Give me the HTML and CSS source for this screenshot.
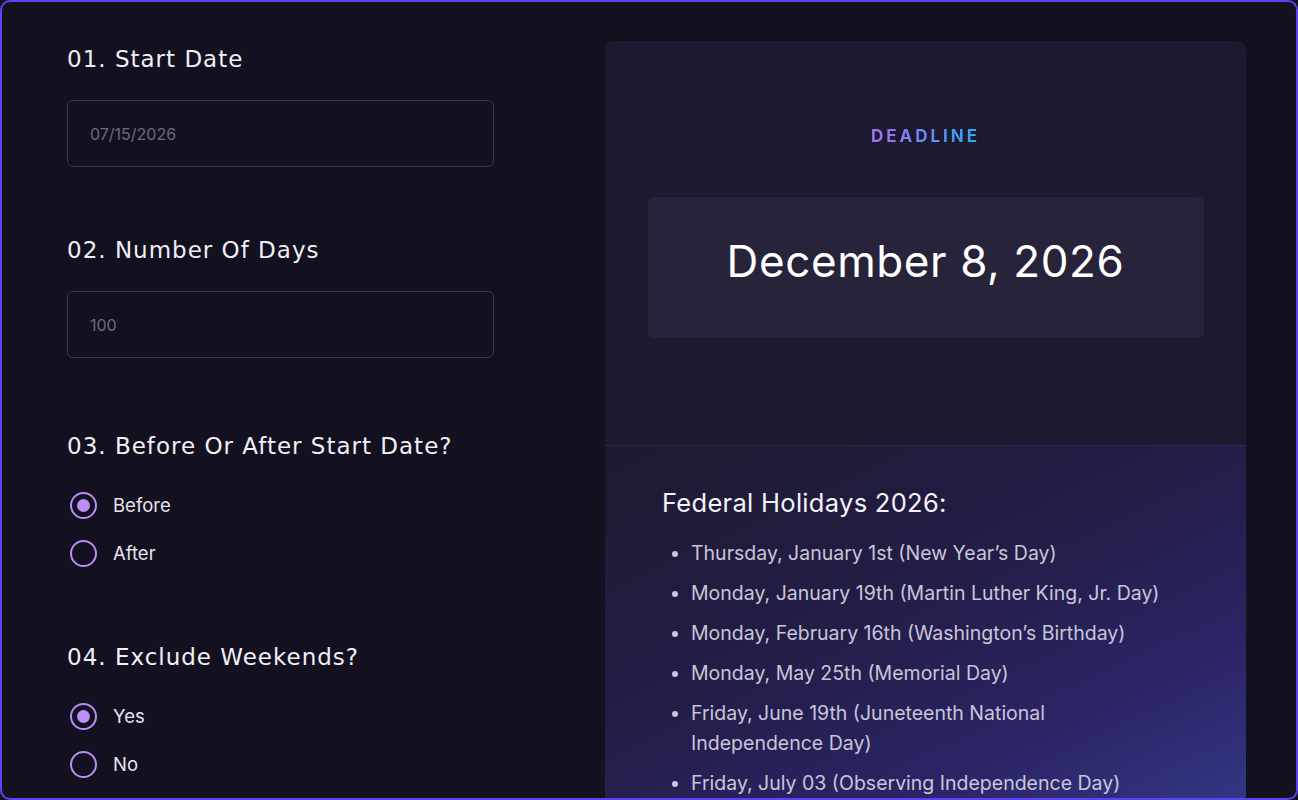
FILE: index.html
```html
<!DOCTYPE html>
<html lang="en">
<head>
<meta charset="utf-8">
<title>Deadline Calculator</title>
<link rel="stylesheet" href="styles.css">
</head>
<body>
<div class="frame">
  <form class="form">
    <section class="field">
      <h2 class="q">01. Start Date</h2>
      <div class="input">07/15/2026</div>
    </section>
    <section class="field f2">
      <h2 class="q">02. Number Of Days</h2>
      <div class="input">100</div>
    </section>
    <section class="field f3">
      <h2 class="q">03. Before Or After Start Date?</h2>
      <div class="radios">
        <div class="radio"><span class="dot on"></span><span class="lbl">Before</span></div>
        <div class="radio"><span class="dot"></span><span class="lbl">After</span></div>
      </div>
    </section>
    <section class="field f4">
      <h2 class="q">04. Exclude Weekends?</h2>
      <div class="radios">
        <div class="radio"><span class="dot on"></span><span class="lbl">Yes</span></div>
        <div class="radio"><span class="dot"></span><span class="lbl">No</span></div>
      </div>
    </section>
  </form>
  <aside class="card">
    <div class="result">
      <div class="label">DEADLINE</div>
      <div class="datebox">December 8, 2026</div>
    </div>
    <div class="holidays">
      <h3 class="htitle">Federal Holidays 2026:</h3>
      <ul class="list">
        <li>Thursday, January 1st (New Year’s Day)</li>
        <li>Monday, January 19th (Martin Luther King, Jr. Day)</li>
        <li>Monday, February 16th (Washington’s Birthday)</li>
        <li>Monday, May 25th (Memorial Day)</li>
        <li>Friday, June 19th (Juneteenth National Independence Day)</li>
        <li>Friday, July 03 (Observing Independence Day)</li>
      </ul>
    </div>
  </aside>
</div>
</body>
</html>
```
FILE: styles.css
```css
* { box-sizing: border-box; }
html, body { margin: 0; padding: 0; background: #13111f; }
body { font-family: Inter, "Noto Sans", sans-serif; }
.frame {
  width: 1298px;
  height: 800px;
  border: 2px solid #5b43f2;
  border-radius: 10px;
  background: #13111f;
  overflow: hidden;
  display: flex;
  align-items: flex-start;
}
.form {
  width: 603px;
  padding: 43px 0 0 65px;
  flex: none;
}
.field { width: 427px; }
.q {
  margin: 0;
  font-family: "DejaVu Sans", Inter, sans-serif;
  font-weight: 400;
  font-size: 23px;
  line-height: 28px;
  letter-spacing: 1px;
  color: #f1eff6;
  white-space: nowrap;
}
.input {
  margin-top: 27px;
  height: 67px;
  border: 1px solid #3a3651;
  border-radius: 6px;
  padding: 0 22px;
  display: flex;
  align-items: center;
  font-size: 16px;
  color: #6d6982;
}
.f2 { margin-top: 69px; }
.f3 { margin-top: 74px; }
.f4 { margin-top: 72px; }
.radios {
  margin-top: 27px;
  display: flex;
  flex-direction: column;
  gap: 12px;
}
.radio {
  height: 36px;
  display: flex;
  align-items: center;
  gap: 16px;
  padding-left: 3px;
}
.dot {
  width: 27px;
  height: 27px;
  border: 2px solid #b98cf6;
  border-radius: 50%;
  display: flex;
  align-items: center;
  justify-content: center;
  flex: none;
}
.dot.on::after {
  content: "";
  width: 13px;
  height: 13px;
  border-radius: 50%;
  background: #bc8ef7;
}
.lbl { font-size: 18.5px; color: #e6e3ee; }
.card {
  width: 641px;
  margin-top: 39px;
  border-radius: 8px 8px 0 0;
  overflow: hidden;
  flex: none;
}
.result {
  height: 405px;
  background: #1d1a2f;
  border-bottom: 1px solid #2e2a44;
  padding: 82px 42px 0;
  display: flex;
  flex-direction: column;
  align-items: center;
}
.label {
  font-size: 17px;
  font-weight: 700;
  letter-spacing: 3px;
  line-height: 26px;
  background: linear-gradient(90deg, #a66df5, #2aa9f1);
  -webkit-background-clip: text;
  background-clip: text;
  color: transparent;
}
.datebox {
  margin-top: 48px;
  width: 556px;
  height: 141px;
  background: #27233b;
  border-radius: 6px;
  display: flex;
  align-items: center;
  justify-content: center;
  font-size: 44px;
  letter-spacing: 0.6px;
  color: #ffffff;
  padding-bottom: 14px;
}
.holidays {
  height: 400px;
  padding: 42px 76px 0 57px;
  background: linear-gradient(155deg, #1d1a31 0%, #221d45 40%, #2a2465 70%, #353b8c 100%);
}
.htitle {
  margin: 0;
  font-size: 25.5px;
  font-weight: 400;
  line-height: 30px;
  letter-spacing: 0.3px;
  color: #f5f3fa;
}
.list {
  margin: 20px 0 0;
  padding-left: 29px;
  color: #c9c5da;
  font-size: 19.5px;
  line-height: 30px;
}
.list li { margin-bottom: 10px; }
.list li::marker { color: #c9c5da; }
```
